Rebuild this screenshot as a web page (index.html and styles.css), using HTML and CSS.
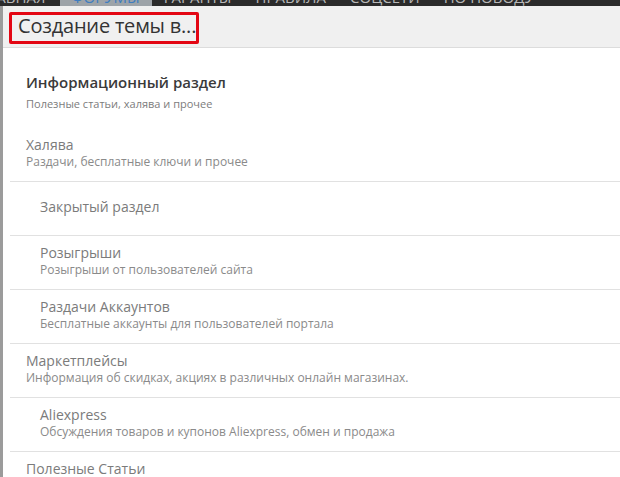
FILE: index.html
```html
<!DOCTYPE html>
<html lang="ru">
<head>
<meta charset="utf-8">
<title>Создание темы</title>
<link rel="stylesheet" href="styles.css">
</head>
<body>
  <nav class="topnav">
    <div class="topnav-inner">
      <span class="topnav-item topnav-item--first">ГЛАВНАЯ</span>
      <span class="topnav-item topnav-item--active">ФОРУМЫ</span>
      <span class="topnav-item">ГАРАНТЫ</span>
      <span class="topnav-item">ПРАВИЛА</span>
      <span class="topnav-item">СОЦСЕТИ</span>
      <span class="topnav-item">ПО ПОВОДУ</span>
      <span class="topnav-item topnav-item--icon">/</span>
    </div>
  </nav>

  <div class="overlay">
    <section class="dialog">
      <header class="dialog-head">
        <h2 class="dialog-title">Создание темы в...</h2>
      </header>

      <div class="node-body">
        <div class="category-head">
          <div class="category-title">Информационный раздел</div>
          <div class="category-desc">Полезные статьи, халява и прочее</div>
        </div>

        <ul class="node-list">
          <li class="node node--cat">
            <div class="node-title">Халява</div>
            <div class="node-desc">Раздачи, бесплатные ключи и прочее</div>
          </li>
          <li class="node node--sub node--bare">
            <div class="node-title">Закрытый раздел</div>
          </li>
          <li class="node node--sub">
            <div class="node-title">Розыгрыши</div>
            <div class="node-desc">Розыгрыши от пользователей сайта</div>
          </li>
          <li class="node node--sub">
            <div class="node-title">Раздачи Аккаунтов</div>
            <div class="node-desc">Бесплатные аккаунты для пользователей портала</div>
          </li>
          <li class="node node--cat">
            <div class="node-title">Маркетплейсы</div>
            <div class="node-desc">Информация об скидках, акциях в различных онлайн магазинах.</div>
          </li>
          <li class="node node--sub">
            <div class="node-title">Aliexpress</div>
            <div class="node-desc">Обсуждения товаров и купонов Aliexpress, обмен и продажа</div>
          </li>
          <li class="node node--cat">
            <div class="node-title">Полезные Статьи</div>
            <div class="node-desc">Статьи, гайды и инструкции</div>
          </li>
        </ul>
      </div>
    </section>
  </div>
</body>
</html>
```

FILE: styles.css
```css
html, body {
  margin: 0;
  padding: 0;
}

body {
  width: 620px;
  height: 477px;
  overflow: hidden;
  background: #9b9b9b;
  font-family: "Open Sans", "DejaVu Sans", sans-serif;
}

/* site navigation, mostly hidden behind the dialog */
.topnav {
  height: 6px;
  overflow: hidden;
  background: #2b2b2b;
}

.topnav-inner {
  display: flex;
  margin-top: -12px;
  font-size: 15px;
  line-height: 18px;
  color: #b8b8b8;
  white-space: nowrap;
}

.topnav-item {
  padding: 0 12px;
}

.topnav-item--first {
  margin-left: -34px;
  padding-right: 14px;
}

.topnav-item--active {
  background: #9da3a8;
  color: #3d7dc0;
  padding: 0 12px;
}

.topnav-item--icon {
  margin-left: 70px;
}

/* dialog */
.overlay {
  padding-left: 3px;
}

.dialog {
  background: #fff;
  height: 471px;
  overflow: hidden;
}

.dialog-head {
  background: #f0f0f0;
  border-bottom: 1px solid #dcdcdc;
  padding: 6px 0 3px 6px;
}

.dialog-title {
  display: inline-block;
  margin: 0;
  padding: 0 0 4px 6px;
  border: 3px solid #e30613;
  border-radius: 2px;
  font-size: 20px;
  font-weight: 400;
  line-height: 22px;
  letter-spacing: -0.2px;
  color: #333;
}

/* node list */
.category-head {
  padding: 24px 0 16px 23px;
}

.category-title {
  font-size: 15px;
  font-weight: 600;
  line-height: 20px;
  color: #3a3a3a;
}

.category-desc {
  margin-top: 4px;
  font-size: 11px;
  line-height: 16px;
  color: #7c7c7c;
}

.node-list {
  list-style: none;
  margin: 0 0 0 7px;
  padding: 0;
}

.node {
  padding: 7px 0 12px;
  border-bottom: 1px solid #e1e1e1;
}

.node--cat {
  padding-left: 16px;
}

.node--sub {
  padding-left: 30px;
}

.node--bare {
  padding-top: 15px;
  padding-bottom: 18px;
}

.node-title {
  font-size: 14px;
  line-height: 20px;
  color: #7b7b7b;
}

.node-desc {
  font-size: 12px;
  line-height: 14px;
  color: #8a8a8a;
}
```
